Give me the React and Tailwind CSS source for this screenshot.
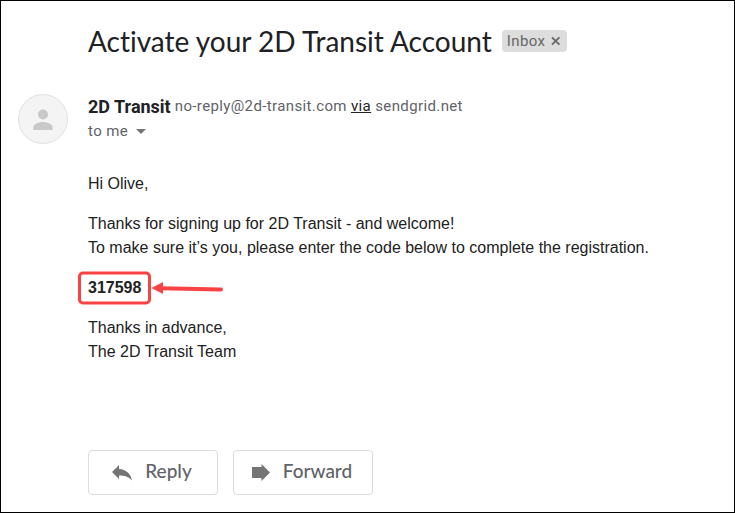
function Avatar() {
  return (
    <svg className="shrink-0" width="50" height="50" viewBox="0 0 50 50" role="img" aria-label="2D Transit">
      <circle cx="25" cy="25" r="24.5" fill="#f4f4f4" stroke="#e0e0e0" />
      <circle cx="25" cy="20.5" r="5" fill="#c9c9c9" />
      <path d="M15.3 36v-2.6c0-3.3 5.6-5.4 9.7-5.4s9.7 2.1 9.7 5.4V36z" fill="#c9c9c9" />
    </svg>
  );
}

function CodeCallout() {
  return (
    <span aria-hidden="true" className="pointer-events-none absolute top-1/2 -left-[10px] flex -translate-y-1/2 items-center">
      <span className="h-[33px] w-[73px] rounded-[5px] border-3 border-[#fa4245]" />
      <svg width="74" height="14" viewBox="0 0 74 14">
        <path d="M10 6.700l60 1.200" stroke="#fa4245" strokeWidth="4" strokeLinecap="round" />
        <path d="M0.500 6.500L12 0.500v12z" fill="#fa4245" />
      </svg>
    </span>
  );
}

function ActionButton({ className, label, children }) {
  return (
    <button type="button" className={`flex h-[45px] items-center justify-center gap-[13px] rounded border border-[#dadce0] pr-0.5 pb-0.5 font-['Lato',sans-serif] text-[19px] font-medium text-[#5f6368] ${className}`}>
      {children}
      <span>{label}</span>
    </button>
  );
}

export default function App() {
  return (
    <main className="flex min-h-screen flex-col border border-black bg-white px-[17px] pt-5 pb-[17px] font-['Liberation_Sans',sans-serif] text-base text-[#222]">
      <header className="flex items-center gap-2.5 pl-[70px]">
        <h1 className="font-['Lato',sans-serif] text-[28px] leading-10 text-[#202124] [font-variant-ligatures:none]">Activate your 2D Transit Account</h1>
        <div className="flex h-[22px] items-center gap-1 rounded bg-[#ddd] px-[5px] font-['Roboto',sans-serif] text-[15px] tracking-wide text-[#666]">
          <span>Inbox</span>
          <button type="button" aria-label="Remove Inbox label">
            <svg width="13" height="12" viewBox="0 0 13 12" stroke="#666" strokeWidth="1.8"><path d="M3 2.300l7.400 7.400M10.400 2.300l-7.400 7.400" /></svg>
          </button>
        </div>
      </header>

      <section className="mt-[33px] flex gap-5 font-['Roboto',sans-serif] text-[15px] leading-[25px] tracking-wide text-[#5f6368]">
        <Avatar />
        <div>
          <div className="flex flex-wrap items-center gap-x-1">
            <strong className="text-lg leading-[25px] tracking-normal text-[#202124]">2D Transit</strong>
            <span>
              no-reply@2d-transit.com <a href="#via" className="text-[#222] underline">via</a> sendgrid.net
            </span>
          </div>
          <button type="button" aria-label="Show details, to me" className="flex items-center gap-2">
            <span>to me</span>
            <svg width="10" height="5" viewBox="0 0 10 5"><path d="M0 0h10L5 5z" fill="#757575" /></svg>
          </button>
        </div>
      </section>

      <article className="mt-7 pl-[70px] leading-6">
        <p>Hi Olive,</p>
        <p className="mt-4">
          Thanks for signing up for 2D Transit - and welcome!<br />
          To make sure it’s you, please enter the code below to complete the registration.
        </p>
        <p className="relative mt-4">
          <strong>317598</strong>
          <CodeCallout />
        </p>
        <p className="mt-4">
          Thanks in advance,<br />
          The 2D Transit Team
        </p>
      </article>

      <footer className="mt-auto flex gap-[15px] pl-[70px]">
        <ActionButton label="Reply" className="w-[130px]">
          <svg className="mt-0.5" width="20" height="16" viewBox="0 0 20 16" fill="#757575"><path d="M0 7L7 0v4C14.500 4.500 19 9 20 15.500 16.500 11.500 12.500 10.500 7 10.500V14z" /></svg>
        </ActionButton>
        <ActionButton label="Forward" className="w-[140px]">
          <svg className="mt-0.5" width="18" height="17" viewBox="0 0 18 17" fill="#757575"><path d="M0 3h9.500V0L18 8.500 9.500 17v-3H0z" /></svg>
        </ActionButton>
      </footer>
    </main>
  );
}
